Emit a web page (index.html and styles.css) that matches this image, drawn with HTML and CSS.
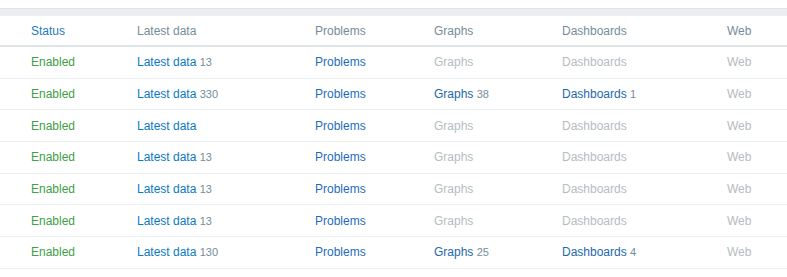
FILE: index.html
```html
<!DOCTYPE html>
<html>
<head>
<meta charset="utf-8">
<link rel="stylesheet" href="styles.css">
</head>
<body>
<div class="band"></div>
<table class="list">
  <colgroup>
    <col class="c1"><col class="c2"><col class="c3"><col class="c4"><col class="c5"><col class="c6">
  </colgroup>
  <thead>
    <tr>
      <th class="first"><a class="sort">Status</a></th>
      <th>Latest data</th>
      <th>Problems</th>
      <th>Graphs</th>
      <th>Dashboards</th>
      <th>Web</th>
    </tr>
  </thead>
  <tbody>
    <tr>
      <td class="first"><span class="green">Enabled</span></td>
      <td><a class="link">Latest data</a> <span class="count">13</span></td>
      <td><a class="link alt">Problems</a></td>
      <td><span class="off">Graphs</span></td>
      <td><span class="off">Dashboards</span></td>
      <td><span class="off">Web</span></td>
    </tr>
    <tr>
      <td class="first"><span class="green">Enabled</span></td>
      <td><a class="link">Latest data</a> <span class="count">330</span></td>
      <td><a class="link alt">Problems</a></td>
      <td><a class="link dark">Graphs</a> <span class="count">38</span></td>
      <td><a class="link dark">Dashboards</a> <span class="count">1</span></td>
      <td><span class="off">Web</span></td>
    </tr>
    <tr>
      <td class="first"><span class="green">Enabled</span></td>
      <td><a class="link">Latest data</a></td>
      <td><a class="link alt">Problems</a></td>
      <td><span class="off">Graphs</span></td>
      <td><span class="off">Dashboards</span></td>
      <td><span class="off">Web</span></td>
    </tr>
    <tr>
      <td class="first"><span class="green">Enabled</span></td>
      <td><a class="link">Latest data</a> <span class="count">13</span></td>
      <td><a class="link alt">Problems</a></td>
      <td><span class="off">Graphs</span></td>
      <td><span class="off">Dashboards</span></td>
      <td><span class="off">Web</span></td>
    </tr>
    <tr>
      <td class="first"><span class="green">Enabled</span></td>
      <td><a class="link">Latest data</a> <span class="count">13</span></td>
      <td><a class="link alt">Problems</a></td>
      <td><span class="off">Graphs</span></td>
      <td><span class="off">Dashboards</span></td>
      <td><span class="off">Web</span></td>
    </tr>
    <tr>
      <td class="first"><span class="green">Enabled</span></td>
      <td><a class="link">Latest data</a> <span class="count">13</span></td>
      <td><a class="link alt">Problems</a></td>
      <td><span class="off">Graphs</span></td>
      <td><span class="off">Dashboards</span></td>
      <td><span class="off">Web</span></td>
    </tr>
    <tr>
      <td class="first"><span class="green">Enabled</span></td>
      <td><a class="link">Latest data</a> <span class="count">130</span></td>
      <td><a class="link alt">Problems</a></td>
      <td><a class="link dark">Graphs</a> <span class="count">25</span></td>
      <td><a class="link dark">Dashboards</a> <span class="count">4</span></td>
      <td><span class="off">Web</span></td>
    </tr>
  </tbody>
</table>
</body>
</html>
```
FILE: styles.css
```css
html, body {
  margin: 0;
  padding: 0;
  background: #ffffff;
}
body {
  font-family: "Liberation Sans", Arial, sans-serif;
  font-size: 12px;
  color: #1f2c33;
}
.band {
  margin-top: 8px;
  height: 7px;
  background: #ebeef0;
  border-top: 1px solid #e0e5e8;
}
.list {
  width: 100%;
  border-collapse: collapse;
  table-layout: fixed;
}
.c1 { width: 137px; }
.c2 { width: 178px; }
.c3 { width: 119px; }
.c4 { width: 128px; }
.c5 { width: 165px; }
.list th {
  text-align: left;
  font-weight: normal;
  color: #768d99;
  padding: 0 5px 0 0;
  height: 29px;
  line-height: 16px;
  border-bottom: 2px solid #dfe4e7;
  white-space: nowrap;
}
.list td {
  padding: 7.33px 5px 7.33px 0;
  line-height: 16px;
  border-bottom: 1px solid #ebeef0;
  white-space: nowrap;
}
.list .first {
  padding-left: 31px;
}
.sort {
  color: #1f78c1;
}
.green {
  color: #429e47;
}
.link {
  color: #0a7ac4;
}
.link.alt {
  color: #1f6cbc;
}
.link.dark {
  color: #1d68ad;
}
.count {
  color: #768d99;
  font-size: 11px;
}
.off {
  color: #b3bdc2;
}
```
